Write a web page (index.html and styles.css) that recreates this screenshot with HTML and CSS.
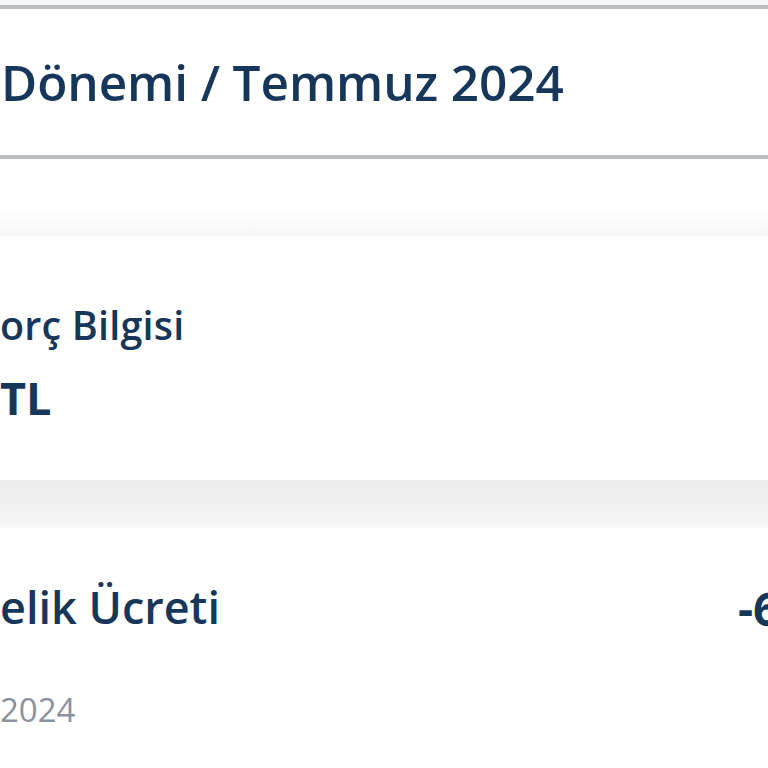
FILE: index.html
```html
<!DOCTYPE html>
<html lang="tr">
  <head>
    <meta charset="UTF-8">
    <meta name="viewport" content="width=device-width, initial-scale=1.0">
    <title>Fatura detayı</title>
    <link rel="stylesheet" href="styles.css">
  </head>
  <body>
    <header class="period">
      <h1 class="period-title">Dönemi / Temmuz 2024</h1>
    </header>

    <div class="gap"></div>

    <section class="debt-card">
      <h2 class="debt-label">orç Bilgisi</h2>
      <p class="debt-amount">TL</p>
    </section>

    <div class="divider"></div>

    <section class="fee-row">
      <div class="fee-info">
        <h3 class="fee-name">elik Ücreti</h3>
        <p class="fee-date">2024</p>
      </div>
      <span class="fee-amount">-60,00 TL</span>
    </section>
  </body>
</html>
```

FILE: styles.css
```css
*,
*::after,
*::before {
  box-sizing: border-box;
}

body {
  margin: 0;
  font-family: "Open Sans", "Noto Sans", sans-serif;
  color: #17375a;
  background: #fff;
  overflow: hidden;
}

h1,
h2,
h3,
p {
  margin: 0;
}

.period {
  padding-top: 5px;
  background: #f4f8fb;
}

.period-title {
  display: flex;
  align-items: center;
  height: 154px;
  padding-left: 1px;
  background: #fff;
  border-top: 4px solid #babec2;
  border-bottom: 4px solid #babec2;
  font-size: 49.5px;
  font-weight: 600;
  letter-spacing: -0.1px;
}

.gap {
  height: 49px;
  background: #fff;
}

.debt-card {
  height: 272px;
  padding-top: 98px;
  background: linear-gradient(#fff 0, #f7f7f7 27px, #fff 28px);
}

.debt-label {
  font-size: 39.5px;
  font-weight: 600;
  line-height: 1;
  letter-spacing: 0.2px;
}

.debt-amount {
  margin-top: 29px;
  font-size: 45px;
  font-weight: 700;
  line-height: 1;
}

.divider {
  height: 48px;
  background: linear-gradient(#ececec, #f4f4f4 85%, #fbfbfb);
}

.fee-row {
  display: flex;
  justify-content: space-between;
  align-items: flex-start;
  padding-top: 52px;
}

.fee-name {
  font-size: 45px;
  font-weight: 600;
  line-height: 1.2;
}

.fee-date {
  margin-top: 59px;
  font-size: 33px;
  color: #8a939c;
  line-height: 1;
}

.fee-amount {
  margin-right: -172px;
  font-size: 47px;
  font-weight: 700;
  line-height: 1.2;
  white-space: nowrap;
}
```
